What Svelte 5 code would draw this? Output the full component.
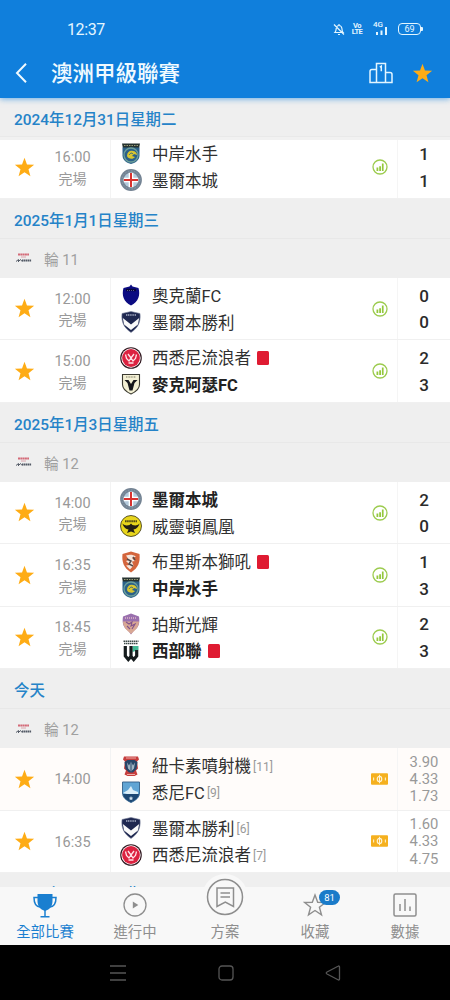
<!--
  League fixtures screen: match days, results, odds and the bottom tab bar
-->
<script lang="ts">
  type Team = { name: string; crest: string; bold?: boolean; red?: boolean; rank?: number };
  type Match = { time: string; done: boolean; home: Team; away: Team; score?: number[]; odds?: string[]; soon?: boolean };
  type Day = { date: string; round?: number; pinned?: boolean; matches: Match[] };

  const days: Day[] = [
    {
      date: '2024年12月31日星期二',
      pinned: true,
      matches: [
        { time: '16:00', done: true, home: { name: '中岸水手', crest: 'mariners' }, away: { name: '墨爾本城', crest: 'city' }, score: [1, 1] }
      ]
    },
    {
      date: '2025年1月1日星期三',
      round: 11,
      matches: [
        { time: '12:00', done: true, home: { name: '奧克蘭FC', crest: 'auckland' }, away: { name: '墨爾本勝利', crest: 'victory' }, score: [0, 0] },
        { time: '15:00', done: true, home: { name: '西悉尼流浪者', crest: 'wanderers', red: true }, away: { name: '麥克阿瑟FC', crest: 'macarthur', bold: true }, score: [2, 3] }
      ]
    },
    {
      date: '2025年1月3日星期五',
      round: 12,
      matches: [
        { time: '14:00', done: true, home: { name: '墨爾本城', crest: 'city', bold: true }, away: { name: '威靈頓鳳凰', crest: 'phoenix' }, score: [2, 0] },
        { time: '16:35', done: true, home: { name: '布里斯本獅吼', crest: 'roar', red: true }, away: { name: '中岸水手', crest: 'mariners', bold: true }, score: [1, 3] },
        { time: '18:45', done: true, home: { name: '珀斯光輝', crest: 'glory' }, away: { name: '西部聯', crest: 'western', bold: true, red: true }, score: [2, 3] }
      ]
    },
    {
      date: '今天',
      round: 12,
      matches: [
        { time: '14:00', done: false, soon: true, home: { name: '紐卡素噴射機', crest: 'jets', rank: 11 }, away: { name: '悉尼FC', crest: 'sydney', rank: 9 }, odds: ['3.90', '4.33', '1.73'] },
        { time: '16:35', done: false, home: { name: '墨爾本勝利', crest: 'victory', rank: 6 }, away: { name: '西悉尼流浪者', crest: 'wanderers', rank: 7 }, odds: ['1.60', '4.33', '4.75'] }
      ]
    },
    { date: '2025年1月5日星期日', matches: [] }
  ];

  const tabs = [
    { id: 'all', label: '全部比賽' },
    { id: 'live', label: '進行中' },
    { id: 'plan', label: '方案' },
    { id: 'saved', label: '收藏', badge: 81 },
    { id: 'stats', label: '數據' }
  ];
  let active = 'all';
</script>

{#snippet star()}
  <svg class="star" viewBox="0 0 22 22">
    <path d="M11 .8l2.600 7 7.500.3-5.900 4.700 2 7.300L11 16l-6.200 4.100 2-7.300L.9 8.100l7.500-.3z" fill="#feac15" />
  </svg>
{/snippet}

{#snippet crest(id: string)}
  <svg class="crest" viewBox="0 0 22 22">
    {#if id === 'mariners'}
      <path d="M2 .5h18l-1 5H3z" fill="#26322f" />
      <path d="M4 2.500h14" stroke="#9a9d7a" stroke-dasharray="1.500 1" />
      <path d="M2.500 4.500h17v8c0 5-4.500 7.500-8.500 8.500-4-1-8.500-3.500-8.500-8.500z" fill="#2b6189" />
      <circle cx="11" cy="12" r="7" fill="none" stroke="#6d9f9a" stroke-width="1.300" />
      <path d="M7 13c0-4 3-6 6-5 2 0 4 2 4 4l-3-1-2 2 3 1c-2 3-7 2-8-1z" fill="#d9c62f" />
      <path d="M9 12c1-1 2-3 4-1" stroke="#2b6189" fill="none" />
    {:else if id === 'city'}
      <circle cx="11" cy="11" r="10.900" fill="#738292" />
      <circle cx="11" cy="11" r="9" fill="none" stroke="#8fa4b8" stroke-width=".8" stroke-dasharray="1.500 1.500" />
      <circle cx="11" cy="11" r="7.300" fill="#b4cadc" />
      <path d="M11 3.700v14.600M3.700 11h14.600" stroke="#fff" stroke-width="4.600" />
      <path d="M11 3.900v14.200M3.900 11h14.200" stroke="#d8322f" stroke-width="2" />
    {:else if id === 'auckland'}
      <path d="M11 .5l1.500 2 6 1.500c2 7 0 14-7.500 17.500C3.500 18 1.500 11 3.500 4l6-1.500z" fill="#0b0b82" />
      <path d="M6 6h10" stroke="#05053b" stroke-width="2.500" />
      <path d="M7 6.500h8" stroke="#7b7bb8" stroke-width=".7" stroke-dasharray="1 1" />
    {:else if id === 'victory'}
      <path d="M2 2.500L11 .5l9 2c.8 8-1.500 14-9 19-7.500-5-9.800-11-9-19z" fill="#1f2850" stroke="#77809a" stroke-width=".6" />
      <path d="M2.800 7L11 13.500 19.200 7l-1.300 6.500L11 19l-6.900-5.500z" fill="#fafafa" />
      <path d="M6 4h10" stroke="#a9afc5" stroke-width="1.600" stroke-dasharray="1.200 .6" />
    {:else if id === 'wanderers'}
      <circle cx="11" cy="11" r="10.800" fill="#30171f" />
      <circle cx="11" cy="11" r="9.700" fill="#fff" />
      <circle cx="11" cy="11" r="8.900" fill="#dc2240" />
      <path d="M5.500 7.500l1 4L9 14l2-3 2 3 2.500-2.500 1-4M8 7l3 4M14 7l-3 4M8.500 16h5" stroke="#ffe4e8" stroke-width="1.300" fill="none" />
    {:else if id === 'macarthur'}
      <path d="M2.500 1.500h17v10c0 5-4 7.500-8.500 9.500-4.500-2-8.500-4.500-8.500-9.500z" fill="#f3f0d4" stroke="#3b3a31" stroke-width="1.100" />
      <path d="M6 4h10" stroke="#77735e" stroke-width="1.200" stroke-dasharray="1 .6" />
      <path d="M4.500 7h4l2.500 4 2.500-4h4l-3 3-2 7.500h-3l-2-7.500z" fill="#15161b" />
    {:else if id === 'phoenix'}
      <circle cx="11" cy="11" r="10.500" fill="#e8d51c" stroke="#353110" stroke-width=".8" />
      <path d="M5 6.300h12" stroke="#504916" stroke-width="2" stroke-dasharray="1.600 .5" />
      <path d="M2.500 8.500c3 3 5.500 1.500 7 1.500L11 8.500l1.500 1.500c1.500 0 4 1.500 7-1.500-1 4-3.500 5.500-6 6L15 18l-4-1.500L7 18l1.500-3.500c-2.500-.5-5-2-6-6z" fill="#241f16" />
    {:else if id === 'roar'}
      <path d="M2.500 3L11 .5 19.500 3c.8 8-1 13.500-8.500 18.500C3.500 16.500 1.700 11 2.500 3z" fill="#d4653c" />
      <path d="M6 4.500c4-1.500 7-1 10 1l-4 1.500 3 3-3 .5 1.500 4-3.500 4-4-4 4-.5-4-4 3-1z" fill="#f5e7dd" />
      <path d="M7 8l4 2-2 3 4 2M13 6l2 3" stroke="#564b4a" stroke-width="1.500" fill="none" />
    {:else if id === 'glory'}
      <path d="M3 3.500L11 .5l8 3c1 6 0 11-5 14l-3 4-3-4C3 14.500 2 9.500 3 3.500z" fill="#9a70ae" />
      <path d="M3 8.500h16c0 4-2.500 8-6 10.500l-2 2-2-2c-3.500-2.500-6-6.500-6-10.500z" fill="#d8a794" />
      <path d="M5 5h12" stroke="#e0b7c7" stroke-width="1.500" stroke-dasharray="1 1" />
      <path d="M6 9l3 2 3-2-1 4 4-2-3 5M7 13l3 3" stroke="#82538c" fill="none" stroke-width="1.100" />
    {:else if id === 'western'}
      <path d="M3.500 1.200h15M4 3.500h14" stroke="#3c4a48" stroke-width="1.600" stroke-dasharray="1.500 .5" />
      <path d="M12.500 6h6v4l-6 2z" fill="#43b996" />
      <path d="M5.300 6v10l3 3.500 2.700-3 2.700 3 3-3.500v-6M11 6v11" fill="none" stroke="#151b1d" stroke-width="3.200" />
    {:else if id === 'jets'}
      <path d="M4 1.500h14l1 3-2 2 1 7-2 2 1.500 4-3 1.500h-7l-3-1.500L6 15.500l-2-2 1-7-2-2z" fill="#c63d3c" />
      <path d="M4.500 7l3-2h7l3 2-1 7-3.500 3.500h-4L5.500 14z" fill="#274568" />
      <path d="M7 7.500l2 3 2-4 2 4 2-3-1 6-3 3-3-3z" fill="#9fb4c2" />
      <path d="M6 3h10M7 19.500h8" stroke="#efaaa4" />
      <path d="M11 5v11" stroke="#274568" />
    {:else if id === 'sydney'}
      <path d="M2.500 1h17v11c0 4.500-4 7.500-8.500 9.500-4.500-2-8.500-5-8.500-9.500z" fill="#61a5d4" stroke="#315f88" stroke-width=".9" />
      <path d="M3 12l5-3 3-4 2 4 5 2v2l-7 1z" fill="#dbeef8" />
      <path d="M3 13h16c-.5 4-4 6.500-8 8.300-4-1.800-7.500-4.300-8-8.300z" fill="#1c4773" />
      <path d="M11 15l.7 1.500 1.600.2-1.200 1 .3 1.600-1.400-.8-1.400.8.300-1.600-1.200-1 1.600-.2z" fill="#cfdfea" />
    {/if}
  </svg>
{/snippet}

{#snippet teamLine(team: Team)}
  <div class="team" class:bold={team.bold}>
    {@render crest(team.crest)}
    <span class="name">{team.name}</span>
    {#if team.red}<i class="red-card"></i>{/if}
    {#if team.rank}<span class="rank">[{team.rank}]</span>{/if}
  </div>
{/snippet}

<div class="screen">
  <header>
    <div class="status-bar">
      <span class="clock">12:37</span>
      <div class="status-icons">
        <svg class="bell" viewBox="0 0 12 13" fill="none" stroke="#e4f6ff" stroke-width="1.200">
          <path d="M2 9.500c1-1 1-2.500 1.200-4C3.500 3.500 4.500 2.500 6 2.500S8.600 3.500 8.900 5.500c.1 1.500.2 3 1.100 4zM5 11.500h2M6 1v1.500M1 1.500l10 10" />
        </svg>
        <span class="volte"><b>Vo</b><b>LTE</b></span>
        <div class="signal">
          <span>4G</span>
          <svg viewBox="0 0 15 14" fill="#e4f6ff">
            <path d="M3 10h2v3H3zM7.500 8.500h2V13h-2zM12 5h2v8h-2z" />
          </svg>
        </div>
        <span class="battery">69</span>
      </div>
    </div>
    <div class="title-bar">
      <svg class="back" viewBox="0 0 12 20" fill="none" stroke="#f0faff" stroke-width="2">
        <path d="M11 .8L2 10l9 9.200" />
      </svg>
      <h1>澳洲甲級聯賽</h1>
      <svg class="podium" viewBox="0 0 24 22" fill="none" stroke="#e2f5ff" stroke-width="1.500">
        <path d="M7.500 20.500V1.500h9v19M7.500 7.500H3q-2 0-2 2v11h22v-8q0-2-2-2h-4.500M10.800 5.200l1.500-1v5" />
      </svg>
      {@render star()}
    </div>
  </header>

  <main>
    {#each days as day}
      <section>
        <h2 class:pinned={day.pinned}>{day.date}</h2>
        {#if day.round}
          <div class="round">
            <svg viewBox="0 0 17 10">
              <path d="M3 1.500h11" stroke="#d46a78" stroke-width="2" stroke-dasharray="2 .3" />
              <path d="M6 4h5" stroke="#dba6ad" />
              <path d="M1 8.500l2.500-2v2.500M4 8l1.500-1.500L7 8.500" stroke="#555c68" fill="none" />
              <path d="M7 7.500h9.500" stroke="#535a66" stroke-width="2.200" stroke-dasharray="1.500 .4" />
            </svg>
            <span>輪 {day.round}</span>
          </div>
        {/if}
        {#each day.matches as match}
          <div class="match" class:soon={match.soon}>
            <div class="when">
              {@render star()}
              <div class="time">
                <span>{match.time}</span>
                {#if match.done}<span class="state">完場</span>{/if}
              </div>
            </div>
            <div class="teams">
              {@render teamLine(match.home)}
              {@render teamLine(match.away)}
            </div>
            <div class="extra">
              {#if match.done}
                <svg width="16" height="16" viewBox="0 0 16 16">
                  <circle cx="8" cy="8" r="7" fill="none" stroke="#9ccb4e" stroke-width="1.300" />
                  <path d="M4.500 8.500h1.800V12H4.500zM7.200 7.200H9V12H7.200zM9.900 4.500h1.700V12H9.900z" fill="#94c83d" />
                </svg>
              {:else}
                <svg width="17" height="12" viewBox="0 0 18 12">
                  <rect width="18" height="12" rx="1" fill="#f5b01e" />
                  <ellipse cx="9" cy="6" rx="2.400" ry="2.800" fill="none" stroke="#fff3d3" stroke-width="1.200" />
                  <path d="M9 1.500v9M2.800 4.500v3M15.200 4.500v3" stroke="#fff3d3" stroke-width="1.100" />
                </svg>
              {/if}
            </div>
            {#if match.score}
              <div class="score">
                {#each match.score as goals}<span>{goals}</span>{/each}
              </div>
            {:else if match.odds}
              <div class="odds">
                {#each match.odds as odd}<span>{odd}</span>{/each}
              </div>
            {/if}
          </div>
        {/each}
      </section>
    {/each}
  </main>

  <nav>
    {#each tabs as tab}
      <button class="tab" class:active={tab.id === active} class:raised={tab.id === 'plan'} on:click={() => (active = tab.id)}>
        <span class="tab-icon">
          {#if tab.id === 'all'}
            <svg width="24" height="25" viewBox="0 0 24 25" fill="none" stroke="currentColor" stroke-width="1.500">
              <path d="M4.500 1h15v7c0 5-2.500 8.500-7.500 10C7 16.500 4.500 13 4.500 8z" fill="currentColor" stroke="none" />
              <path d="M5 4.500H1c0 6 1.500 9 6 9.500M19 4.500h4c0 6-1.500 9-6 9.500M12 17v6.500M7.500 23.800h9" />
            </svg>
          {:else if tab.id === 'live'}
            <svg width="24" height="24" viewBox="0 0 24 24">
              <circle cx="12" cy="12" r="11" fill="none" stroke="currentColor" stroke-width="1.300" />
              <path d="M9.800 8.500l5.500 3.500-5.500 3.500z" fill="currentColor" />
            </svg>
          {:else if tab.id === 'plan'}
            <svg width="38" height="38" viewBox="0 0 38 38" fill="none" stroke="currentColor" stroke-width="1.500">
              <circle cx="19" cy="19" r="17.500" />
              <path d="M11 10h16.500v18.500L19.300 24 11 28.500zM14.500 15h9.500M14.500 19h9.500" />
            </svg>
          {:else if tab.id === 'saved'}
            <svg width="24" height="24" viewBox="0 0 24 24" fill="none" stroke="currentColor" stroke-width="1.400">
              <path d="M12 2l2.700 7.200 7.700.3-6 4.800 2.100 7.500L12 17.500l-6.500 4.300 2.100-7.500-6-4.800 7.700-.3z" />
            </svg>
          {:else}
            <svg width="24" height="24" viewBox="0 0 24 24" fill="none" stroke="currentColor" stroke-width="1.500">
              <rect x="1" y="1" width="22" height="22" rx="1.500" />
              <path d="M7 11v7M12 6v12M17 13.500V18" />
            </svg>
          {/if}
          {#if tab.badge}<span class="badge">{tab.badge}</span>{/if}
        </span>
        <span class="tab-label">{tab.label}</span>
      </button>
    {/each}
  </nav>

  <div class="system-bar">
    <svg width="18" height="16" viewBox="0 0 18 16"><path d="M1 1h16M1 8h16M1 15h16" /></svg>
    <svg width="16" height="16" viewBox="0 0 16 16"><rect x="1" y="1" width="14" height="14" rx="3" /></svg>
    <svg width="16" height="16" viewBox="0 0 16 16"><path d="M14.500 2v12c0 1-.8 1.200-1.500.8L2 9c-1-.6-1-1.400 0-2l11-5.800c.7-.4 1.500-.2 1.500.8z" /></svg>
  </div>
</div>

<style>
  :global(body) {
    margin: 0;
  }

  .screen {
    display: flex;
    flex-direction: column;
    width: 450px;
    height: 1000px;
    overflow: hidden;
    background: #efefef;
    font-family: Roboto, 'Noto Sans CJK TC', sans-serif;
  }

  header {
    flex: none;
    position: relative;
    z-index: 2;
    height: 98px;
    background: #107fdc;
    box-shadow: 0 1px 6px rgba(16, 127, 220, 0.6);
  }

  .status-bar {
    display: flex;
    align-items: center;
    justify-content: space-between;
    height: 48px;
    padding: 10px 28px 0 67px;
    box-sizing: border-box;
    color: #e4f6ff;
  }

  .clock {
    font-size: 16px;
    letter-spacing: -0.4px;
  }

  .status-icons {
    display: flex;
    align-items: center;
  }

  .bell {
    width: 12px;
    height: 13px;
    margin-right: 6px;
  }

  .volte {
    display: flex;
    flex-direction: column;
    align-items: center;
    width: 12px;
    margin-right: 10px;
    line-height: 6.500px;
  }

  .volte b {
    font-size: 7.500px;
    letter-spacing: -0.6px;
  }

  .signal {
    position: relative;
    width: 15px;
    height: 14px;
    margin-right: 10px;
  }

  .signal span {
    position: absolute;
    top: -1px;
    left: 0;
    font-size: 8px;
    line-height: 8px;
    font-weight: 500;
  }

  .signal svg {
    display: block;
    width: 15px;
    height: 14px;
  }

  .battery {
    position: relative;
    width: 21px;
    height: 10px;
    margin-right: 1px;
    border: 1.500px solid #e4f6ff;
    border-radius: 4px;
    font-size: 9px;
    line-height: 10px;
    text-align: center;
  }

  .battery::after {
    content: '';
    position: absolute;
    top: 3px;
    right: -3px;
    width: 2px;
    height: 4px;
    background: #e4f6ff;
    border-radius: 0 1px 1px 0;
  }

  .title-bar {
    display: flex;
    align-items: center;
    height: 50px;
    padding: 0 17px 0 15px;
  }

  .back {
    width: 12px;
    height: 20px;
    margin-right: 24px;
  }

  h1 {
    flex: 1;
    margin: 0;
    padding-top: 2px;
    font-size: 21.500px;
    font-weight: 500;
    line-height: 30px;
    color: #f0faff;
  }

  .podium {
    width: 24px;
    height: 22px;
    margin-right: 19px;
  }

  .star {
    flex: none;
    width: 21px;
    height: 21px;
  }

  main {
    flex: 1;
    min-height: 0;
    overflow: hidden;
  }

  h2 {
    height: 39.800px;
    margin: 0;
    padding: 0 14px;
    box-sizing: border-box;
    border-bottom: 1px solid #e8e8e8;
    font-size: 15.400px;
    font-weight: 500;
    line-height: 44px;
    color: #2583c8;
  }

  /* The pinned date overlaps the first rows of the list scrolled under it */
  h2.pinned {
    position: relative;
    z-index: 1;
    height: 41.500px;
    margin-bottom: -3px;
    border-bottom: 0;
    background: linear-gradient(#efefef 38px, #e9e9e9 38px, #e9e9e9 39px, #f1f1f1 39px);
  }

  .round {
    display: flex;
    align-items: center;
    height: 39.600px;
    padding-left: 15px;
    font-size: 14.700px;
    color: #a0a0a0;
  }

  .round svg {
    width: 17px;
    height: 10px;
    margin-right: 12px;
  }

  .match {
    display: flex;
    height: 62.300px;
    box-sizing: border-box;
    border-bottom: 1px solid #f0f0f0;
    background: #fff;
  }

  .match.soon {
    background: #fffcfa;
  }

  .when {
    display: flex;
    align-items: center;
    width: 111px;
    padding-left: 14px;
    box-sizing: border-box;
    border-right: 1px solid #f3f3f3;
  }

  .time {
    display: flex;
    flex: 1;
    flex-direction: column;
    align-items: center;
    padding-top: 3px;
    font-size: 14.500px;
    line-height: 20.500px;
    color: #999;
  }

  .state {
    font-size: 14px;
  }

  .teams {
    display: flex;
    flex: 1;
    flex-direction: column;
    justify-content: center;
    padding-left: 9px;
  }

  .team {
    display: flex;
    align-items: center;
    height: 26.700px;
    font-size: 16.500px;
    line-height: 26px;
    color: #303030;
    white-space: nowrap;
  }

  .name {
    padding-top: 3px;
  }

  .team.bold {
    font-weight: 700;
    color: #222;
  }

  .crest {
    width: 22px;
    height: 22px;
    margin-right: 10px;
  }

  .red-card {
    width: 12px;
    height: 14px;
    margin-left: 6px;
    border-radius: 1.500px;
    background: #df1b32;
  }

  .rank {
    margin-left: 2px;
    padding-top: 2px;
    font-size: 12px;
    color: #999;
  }

  .extra {
    display: flex;
    align-items: center;
    justify-content: center;
    width: 35px;
    border-right: 1px solid #f5f5f5;
  }

  .score,
  .odds {
    display: flex;
    flex-direction: column;
    align-items: center;
    justify-content: center;
    width: 52px;
    padding-top: 1px;
  }

  .score {
    font-size: 17px;
    font-weight: 500;
    line-height: 26.700px;
    color: #2b2b2b;
  }

  .odds {
    font-size: 14.800px;
    line-height: 17.200px;
    color: #999;
  }

  nav {
    flex: none;
    position: relative;
    z-index: 2;
    display: flex;
    height: 58px;
    background: #f8f8f8;
  }

  .tab {
    display: flex;
    flex: 1;
    flex-direction: column;
    align-items: center;
    padding: 0;
    border: 0;
    background: none;
    font-family: inherit;
    color: #8e8e8e;
  }

  .tab.active {
    color: #1a7fd0;
  }

  .tab-icon {
    position: relative;
    display: flex;
    align-items: center;
    justify-content: center;
    height: 36px;
  }

  .tab-label {
    padding-top: 1px;
    font-size: 14.400px;
    line-height: 18px;
  }

  /* The middle tab sits in a disc that rises above the bar */
  .raised .tab-icon {
    width: 46px;
    height: 46px;
    margin: -13px 0 3px;
    border-radius: 50%;
    background: #f8f8f8;
  }

  .badge {
    position: absolute;
    top: 3px;
    left: 16px;
    width: 21px;
    height: 15px;
    border-radius: 8px;
    background: #1a7bc9;
    font-size: 9.500px;
    line-height: 15px;
    text-align: center;
    color: #fff;
  }

  .system-bar {
    flex: none;
    display: flex;
    align-items: center;
    justify-content: center;
    gap: 91px;
    height: 55px;
    background: #000;
  }

  .system-bar svg {
    fill: none;
    stroke: #555;
    stroke-width: 1.300;
  }
</style>
